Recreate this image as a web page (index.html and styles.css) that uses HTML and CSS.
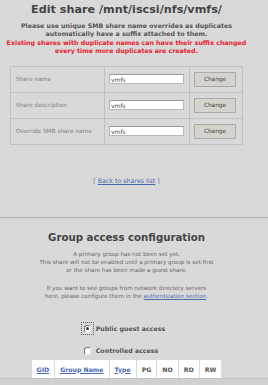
FILE: index.html
```html
<!DOCTYPE html>
<html>
<head>
<meta charset="utf-8">
<link rel="stylesheet" href="styles.css">
</head>
<body>
<div class="page">
  <h1 class="title">Edit share /mnt/iscsi/nfs/vmfs/</h1>
  <p class="note">Please use unique SMB share name overrides as duplicates<br>automatically have a suffix attached to them.<br><span class="warn">Existing shares with duplicate names can have their suffix changed<br>every time more duplicates are created.</span></p>
  <table class="form">
    <tr>
      <td class="lbl">Share name</td>
      <td class="fld"><span class="input">vmfs</span></td>
      <td class="act"><span class="btn">Change</span></td>
    </tr>
    <tr>
      <td class="lbl">Share description</td>
      <td class="fld"><span class="input">vmfs</span></td>
      <td class="act"><span class="btn">Change</span></td>
    </tr>
    <tr>
      <td class="lbl">Override SMB share name</td>
      <td class="fld"><span class="input">vmfs</span></td>
      <td class="act"><span class="btn">Change</span></td>
    </tr>
  </table>
  <p class="back">[ <a href="#">Back to shares list</a> ]</p>
</div>
<hr class="sep">
<div class="page">
  <h2 class="title2">Group access configuration</h2>
  <p class="info">A primary group has not been set yet.<br>This share will not be enabled until a primary group is set first<br>or the share has been made a guest share.</p>
  <p class="info">If you want to see groups from network directory servers<br>here, please configure them in the <a href="#">authentication section</a>.</p>
  <div class="radios">
    <div class="radio"><span class="rbox focus"><span class="rdot on"></span></span><span class="rlbl">Public guest access</span></div>
    <div class="radio"><span class="rbox"><span class="rdot"></span></span><span class="rlbl">Controlled access</span></div>
  </div>
  <table class="groups">
    <tr>
      <th><a href="#">GID</a></th>
      <th><a href="#">Group Name</a></th>
      <th><a href="#">Type</a></th>
      <th>PG</th>
      <th>NO</th>
      <th>RO</th>
      <th>RW</th>
    </tr>
  </table>
</div>
<div class="footer"></div>
</body>
</html>
```
FILE: styles.css
```css
html, body {
  margin: 0;
  padding: 0;
  background: #d9d9d9;
  font-family: "DejaVu Sans", Verdana, sans-serif;
  color: #555;
  overflow: hidden;
  height: 385px;
}
.page {
  width: 253px;
  display: flex;
  flex-direction: column;
  align-items: center;
}
.title {
  margin: 3px 0 0;
  font-size: 11.2px;
  line-height: 14px;
  font-weight: bold;
  color: #444;
}
.note {
  margin: 5px 0 0;
  font-size: 6.3px;
  line-height: 8.4px;
  font-weight: bold;
  text-align: center;
  color: #555;
}
.warn { color: #e8202e; }
.form {
  margin: 10px 0 0;
  border-collapse: collapse;
}
.form td {
  border: 1px solid #c0c0c0;
  height: 25px;
  padding: 0;
  font-size: 5.8px;
  color: #808080;
}
.lbl { width: 88px; padding-left: 5px !important; }
.fld { width: 84px; }
.act { width: 52px; }
.input {
  display: block;
  margin-left: 4px;
  width: 72px;
  height: 8px;
  background: #fff;
  border: 1px solid #b8b8b8;
  border-top-color: #999;
  font-size: 6px;
  line-height: 10px;
  color: #444;
  padding-left: 1px;
  box-sizing: content-box;
}
.btn {
  display: block;
  margin-left: 4px;
  width: 40px;
  height: 13px;
  line-height: 13px;
  text-align: center;
  background: #d6d3cc;
  border: 1px solid #aaa;
  font-size: 5.8px;
  color: #444;
}
.back {
  margin: 32px 0 0;
  font-size: 6.3px;
  line-height: 8px;
  color: #777;
}
a { color: #4a6ab0; }
.sep {
  margin: 32px 0 0;
  border: 0;
  border-top: 1px solid #b0b0b0;
  height: 0;
}
.title2 {
  margin: 13px 0 0;
  font-size: 10.2px;
  line-height: 14px;
  font-weight: bold;
  color: #444;
}
.info {
  margin: 5px 0 0;
  font-size: 5.6px;
  line-height: 8.3px;
  text-align: center;
  color: #666;
}
.info + .info { margin-top: 9px; }
.radios {
  margin-top: 22px;
  display: flex;
  flex-direction: column;
  gap: 9px;
  margin-left: -7px;
}
.radio {
  display: flex;
  align-items: center;
  gap: 2px;
}
.rbox {
  width: 13px;
  height: 13px;
  display: flex;
  align-items: center;
  justify-content: center;
  border: 1px dotted transparent;
  box-sizing: border-box;
}
.rbox.focus { border-color: #666; }
.rdot {
  width: 7px;
  height: 8px;
  border-radius: 3px;
  background: #fff;
  border-top: 1px solid #777;
  border-left: 1px solid #777;
  border-right: 1px solid #eee;
  border-bottom: 1px solid #eee;
  box-sizing: border-box;
  position: relative;
}
.rdot.on::after {
  content: "";
  position: absolute;
  left: 1px;
  top: 1px;
  width: 3px;
  height: 3px;
  border-radius: 50%;
  background: #333;
}
.rlbl {
  font-size: 6.3px;
  font-weight: bold;
  color: #555;
}
.groups {
  margin: 3px 0 0 0;
  border-collapse: separate;
  border-spacing: 1px 0;
}
.groups th {
  background: #fff;
  height: 18px;
  padding: 0 5px;
  font-size: 6.2px;
  font-weight: bold;
  color: #555;
}
.groups th a { color: #4a6ab0; }
.footer {
  border-top: 1px solid #c4c4c4;
  background: #d0d0d0;
  height: 10px;
}
```
